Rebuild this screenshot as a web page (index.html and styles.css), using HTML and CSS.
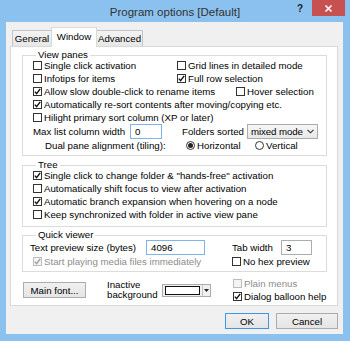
FILE: index.html
```html
<!DOCTYPE html>
<html lang="en">
<head>
    <meta charset="UTF-8">
    <meta name="viewport" content="width=device-width, initial-scale=1.0">
    <title>Program options [Default]</title>
    <link rel="stylesheet" href="styles.css">
</head>
<body>
    <!-- Dialog window -->
    <div class="window">
        <div class="titlebar">
            <span class="title">Program options [Default]</span>
            <div class="controls">
                <span class="help">?</span>
                <span class="close">
                    <svg width="9" height="9" viewBox="0 0 9 9"><path d="M1.5 1.5 L7.5 7.5 M7.5 1.5 L1.5 7.5" stroke="#fff" stroke-width="1.6"/></svg>
                </span>
            </div>
        </div>

        <div class="client">
            <div class="tabs">
                <div class="tab tab-general">General</div>
                <div class="tab tab-window active">Window</div>
                <div class="tab tab-advanced">Advanced</div>
            </div>

            <div class="page">
                <!-- View panes -->
                <fieldset class="group views">
                    <legend>View panes</legend>
                    <div class="row">
                        <label class="check col-a"><span class="box"></span>Single click activation</label>
                        <label class="check"><span class="box"></span>Grid lines in detailed mode</label>
                    </div>
                    <div class="row">
                        <label class="check col-a"><span class="box"></span>Infotips for items</label>
                        <label class="check"><span class="box checked"></span>Full row selection</label>
                    </div>
                    <div class="row">
                        <label class="check col-b"><span class="box checked"></span>Allow slow double-click to rename items</label>
                        <label class="check"><span class="box"></span>Hover selection</label>
                    </div>
                    <div class="row">
                        <label class="check"><span class="box checked"></span>Automatically re-sort contents after moving/copying etc.</label>
                    </div>
                    <div class="row">
                        <label class="check"><span class="box"></span>Hilight primary sort column (XP or later)</label>
                    </div>
                    <div class="row tall">
                        <span class="lbl maxlist">Max list column width</span>
                        <span class="edit blue w-max">0</span>
                        <span class="lbl folders">Folders sorted</span>
                        <span class="combo">mixed mode
                            <svg class="chev" width="7" height="5" viewBox="0 0 7 5"><path d="M0.5 0.8 L3.5 3.8 L6.5 0.8" fill="none" stroke="#333" stroke-width="1.1"/></svg>
                        </span>
                    </div>
                    <div class="row tall">
                        <span class="lbl dual">Dual pane alignment (tiling):</span>
                        <label class="radio horiz"><span class="dot on"></span>Horizontal</label>
                        <label class="radio"><span class="dot"></span>Vertical</label>
                    </div>
                </fieldset>

                <!-- Tree -->
                <fieldset class="group tree">
                    <legend>Tree</legend>
                    <div class="row">
                        <label class="check"><span class="box checked"></span>Single click to change folder &amp; "hands-free" activation</label>
                    </div>
                    <div class="row">
                        <label class="check"><span class="box"></span>Automatically shift focus to view after activation</label>
                    </div>
                    <div class="row">
                        <label class="check"><span class="box checked"></span>Automatic branch expansion when hovering on a node</label>
                    </div>
                    <div class="row">
                        <label class="check"><span class="box"></span>Keep synchronized with folder in active view pane</label>
                    </div>
                </fieldset>

                <!-- Quick viewer -->
                <fieldset class="group viewer">
                    <legend>Quick viewer</legend>
                    <div class="row field-row">
                        <span class="lbl preview">Text preview size (bytes)</span>
                        <span class="edit blue w-preview">4096</span>
                        <span class="lbl tabw">Tab width</span>
                        <span class="edit w-tab">3</span>
                    </div>
                    <div class="row">
                        <label class="check disabled col-c"><span class="box checked"></span>Start playing media files immediately</label>
                        <label class="check"><span class="box"></span>No hex preview</label>
                    </div>
                </fieldset>

                <div class="bottom-row">
                    <button type="button" class="btn font-btn">Main font...</button>
                    <span class="lbl inactive">Inactive<br>background</span>
                    <span class="color-pick">
                        <span class="swatch"></span>
                        <span class="drop">
                            <svg width="5" height="3" viewBox="0 0 5 3"><path d="M0 0 H5 L2.5 3 Z" fill="#222"/></svg>
                        </span>
                    </span>
                    <div class="checks">
                        <div class="row">
                            <label class="check disabled"><span class="box"></span>Plain menus</label>
                        </div>
                        <div class="row">
                            <label class="check"><span class="box checked"></span>Dialog balloon help</label>
                        </div>
                    </div>
                </div>
            </div>

            <div class="actions">
                <button type="button" class="btn ok">OK</button>
                <button type="button" class="btn cancel">Cancel</button>
            </div>
        </div>
    </div>
</body>
</html>
```

FILE: styles.css
```css
/* Windows 8 style options dialog */
* {
    box-sizing: border-box;
}

body {
    margin: 0;
    font-family: "Liberation Sans", Arial, sans-serif;
    font-size: 9.7px;
    color: #000;
    background: #fff;
}

.window {
    width: 350px;
    height: 341px;
    background: #8bc1ee;
    display: flex;
    flex-direction: column;
}

/* Title bar */
.titlebar {
    height: 22px;
    display: grid;
    grid-template-columns: 1fr auto 1fr;
    align-items: start;
}

.title {
    grid-column: 2;
    font-size: 11.5px;
    color: #333;
    line-height: 22px;
    padding-top: 1px;
}

.controls {
    grid-column: 3;
    justify-self: end;
    display: flex;
    align-items: flex-start;
    margin-right: 5px;
}

.help {
    font-weight: bold;
    font-size: 10px;
    color: #222;
    margin-top: 3px;
    margin-right: 9px;
}

.close {
    width: 33px;
    height: 16px;
    background: #c75050;
    display: flex;
    align-items: center;
    justify-content: center;
}

/* Client area */
.client {
    flex: 1;
    margin: 0 7px 7px 6px;
    background: #f0f0f0;
    padding: 5px 5px 0 4px;
    display: flex;
    flex-direction: column;
}

.tabs {
    display: flex;
    align-items: flex-end;
    height: 19px;
    padding-left: 2px;
    position: relative;
    z-index: 1;
}

.tab {
    height: 16px;
    line-height: 15px;
    text-align: center;
    border: 1px solid #c4c4c4;
    border-bottom: none;
    background: linear-gradient(#f3f3f3, #e7e7e7);
}

.tab-general { width: 40px; }
.tab-window { width: 46px; margin-left: -1px; }
.tab-advanced { width: 47px; margin-left: -1px; }

.tab.active {
    height: 20px;
    line-height: 17px;
    margin-bottom: -1px;
    background: #fff;
    border-color: #d9d9d9;
    position: relative;
    z-index: 2;
}

.page {
    height: 260px;
    border: 1px solid #d9d9d9;
    background: #fff;
    padding: 3px 10px 0 11px;
}

/* Group boxes */
.group {
    margin: 0;
    padding: 0 0 3px 10px;
    border: 1px solid #dcdcdc;
    min-width: 0;
}

.group legend {
    padding: 0 2px;
    margin-left: 3px;
    line-height: 10px;
    height: 10px;
}

.group > legend + .row {
    margin-top: -1px;
}

.tree {
    margin-top: 4px;
    padding-bottom: 5px;
}

.viewer {
    margin-top: 3px;
}

.viewer > legend + .row {
    margin-top: 0;
}

.row {
    display: flex;
    align-items: center;
    height: 13px;
    white-space: nowrap;
}

.row.tall {
    height: 14px;
}

.row.field-row {
    height: 15px;
}

/* Checkboxes and radios */
.check, .radio {
    display: flex;
    align-items: center;
}

.col-a { width: 144px; }
.col-b { width: 203px; }
.col-c { width: 199px; }

.box {
    width: 9px;
    height: 9px;
    border: 1px solid #333;
    background: #fff;
    margin-right: 2px;
    flex: none;
}

.box.checked {
    background: #fff url("data:image/svg+xml,%3Csvg xmlns='http://www.w3.org/2000/svg' width='7' height='7' viewBox='0 0 7 7'%3E%3Cpath d='M0.8 3.6 L2.6 5.6 L6.2 0.9' fill='none' stroke='%23111' stroke-width='1.4'/%3E%3C/svg%3E") center / 7px 7px no-repeat;
}

.check.disabled {
    color: #8d8d8d;
}

.check.disabled .box {
    border-color: #bcbcbc;
    background-color: #f4f4f4;
}

.check.disabled .box.checked {
    background-image: url("data:image/svg+xml,%3Csvg xmlns='http://www.w3.org/2000/svg' width='7' height='7' viewBox='0 0 7 7'%3E%3Cpath d='M0.8 3.6 L2.6 5.6 L6.2 0.9' fill='none' stroke='%23a0a0a0' stroke-width='1.4'/%3E%3C/svg%3E");
}

.dot {
    width: 9px;
    height: 9px;
    border: 1px solid #333;
    border-radius: 50%;
    background: #fff;
    margin-right: 2px;
    display: flex;
    align-items: center;
    justify-content: center;
    flex: none;
}

.dot.on::after {
    content: "";
    width: 5px;
    height: 5px;
    border-radius: 50%;
    background: #222;
}

.horiz { width: 69px; }

/* Labels, edits and combos */
.lbl.maxlist { width: 97px; }
.lbl.folders { width: 65px; margin-left: 20px; }
.lbl.dual { width: 141px; margin-left: 12px; }
.lbl.preview { width: 116px; margin-left: -3px; }
.lbl.tabw { width: 49px; margin-left: 27px; }

.edit {
    height: 15px;
    line-height: 13px;
    border: 1px solid #abadb3;
    background: #fff;
    padding-left: 4px;
}

.edit.blue { border-color: #7eb4ea; }
.w-max { width: 32px; }
.w-preview { width: 59px; }
.w-tab { width: 31px; }

.combo {
    width: 71px;
    height: 15px;
    line-height: 13px;
    border: 1px solid #acacac;
    background: linear-gradient(#f6f6f6, #e8e8e8);
    display: flex;
    align-items: center;
    justify-content: space-between;
    padding: 0 3px 0 3px;
    letter-spacing: -0.1px;
}

/* Bottom of the page */
.bottom-row {
    display: flex;
    align-items: center;
    height: 26px;
    margin-top: 5px;
}

.btn {
    font-family: inherit;
    font-size: inherit;
    color: #000;
    height: 16px;
    padding: 0;
    border: 1px solid #acacac;
    background: linear-gradient(#f0f0f0, #e5e5e5);
}

.font-btn {
    width: 63px;
    margin-left: 1px;
}

.lbl.inactive {
    width: 55px;
    line-height: 10px;
    margin-left: 21px;
}

.color-pick {
    width: 49px;
    height: 13px;
    border: 1px solid #acacac;
    background: #f0f0f0;
    display: flex;
    align-items: center;
    padding-left: 2px;
}

.swatch {
    width: 35px;
    height: 9px;
    border: 1px solid #111;
    background: #fff;
}

.drop {
    flex: 1;
    height: 100%;
    display: flex;
    align-items: center;
    justify-content: center;
    border-left: 1px solid #c8c8c8;
    margin-left: 2px;
}

.checks {
    margin-left: 22px;
}

/* Dialog buttons */
.actions {
    display: flex;
    justify-content: flex-end;
    gap: 7px;
    margin-top: 7px;
}

.btn.ok {
    width: 44px;
    border-color: #3c97e8;
}

.btn.cancel {
    width: 62px;
}
```
